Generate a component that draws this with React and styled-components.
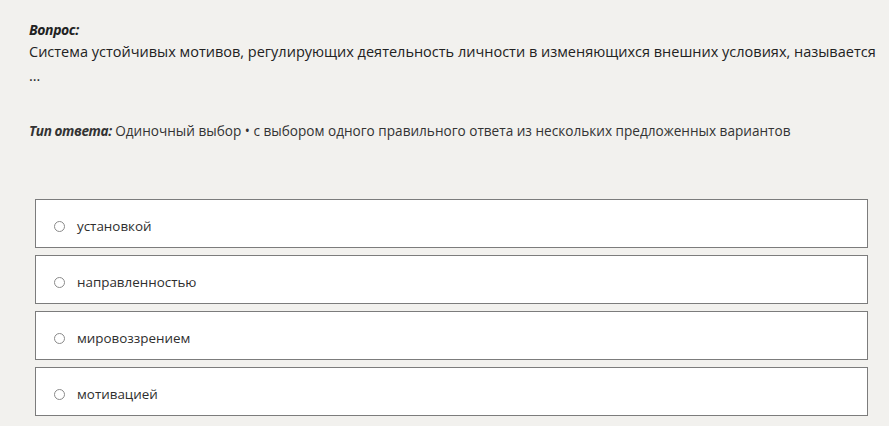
import React from 'react';
import styled, { createGlobalStyle } from 'styled-components';

const GlobalStyle = createGlobalStyle`
  html, body {
    margin: 0;
    padding: 0;
    background: #f2f1ee;
  }
  body {
    font-family: "Open Sans", "Noto Sans", sans-serif;
    color: #222;
  }
`;

const Page = styled.div`
  width: 889px;
  height: 426px;
  overflow: hidden;
  padding: 20px 0 0 29px;
  box-sizing: border-box;
`;

const Label = styled.span`
  font-weight: 700;
  font-style: italic;
  letter-spacing: -0.4px;
`;

const QuestionBlock = styled.div`
  font-size: 14px;
  line-height: 20px;
`;

const QuestionText = styled.div`
  font-size: 14.5px;
  line-height: 24px;
  width: 850px;
  color: #222;
`;

const AnswerType = styled.div`
  margin-top: 33px;
  font-size: 13.6px;
  line-height: 20px;
  color: #333;
`;

const Options = styled.div`
  display: flex;
  flex-direction: column;
  gap: 7px;
  margin: 58px 0 0 6px;
  width: 833px;
`;

const Option = styled.label`
  display: flex;
  align-items: center;
  gap: 12px;
  height: 49px;
  box-sizing: border-box;
  padding: 5px 0 0 18px;
  background: #fff;
  border: 1px solid #7c7c7c;
  font-size: 13.4px;
  color: #2e2e2e;
`;

const Radio = styled.span`
  width: 11px;
  height: 11px;
  border-radius: 50%;
  border: 1px solid #8a8a8a;
  box-sizing: border-box;
`;

const options = ['установкой', 'направленностью', 'мировоззрением', 'мотивацией'];

export default function App() {
  return (
    <Page>
      <GlobalStyle />
      <QuestionBlock>
        <Label>Вопрос:</Label>
        <QuestionText>
          Система устойчивых мотивов, регулирующих деятельность личности в изменяющихся внешних условиях, называется …
        </QuestionText>
      </QuestionBlock>
      <AnswerType>
        <Label>Тип ответа:</Label> Одиночный выбор • с выбором одного правильного ответа из нескольких предложенных вариантов
      </AnswerType>
      <Options>
        {options.map((o) => (
          <Option key={o}>
            <Radio />
            {o}
          </Option>
        ))}
      </Options>
    </Page>
  );
}
